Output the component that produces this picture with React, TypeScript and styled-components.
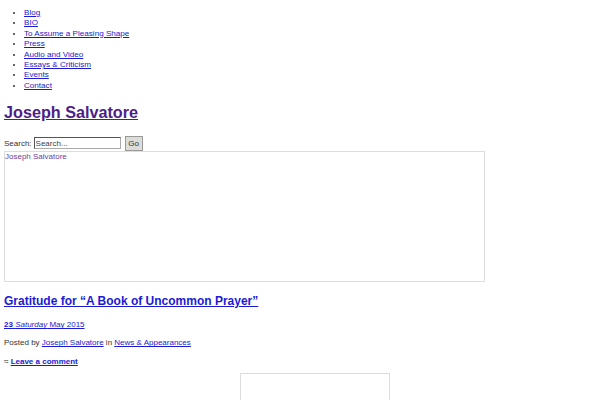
import React from "react";
import styled, { createGlobalStyle } from "styled-components";

const Global = createGlobalStyle`
  html, body { margin: 0; padding: 0; background: #fff; }
  body {
    font-family: "Liberation Sans", Arial, sans-serif;
    font-size: 8px;
    color: #333;
    padding: 0 4px;
  }
  a { color: #1a1ad6; }
`;

const Page = styled.div`
  display: flex;
  flex-direction: column;
  width: 592px;
`;

const Nav = styled.ul`
  margin: 8px 0 0;
  padding-left: 20px;
  list-style: disc;
  font-size: 8.1px;
  line-height: 10.4px;
`;

const NavItem = styled.li`
  a { color: #1a1ad6; }
`;

const SiteTitle = styled.h1`
  margin: 11px 0 0;
  font-size: 16.2px;
  line-height: 20px;
  font-weight: 700;
  a { color: #4b1f8a; }
`;

const SearchRow = styled.form`
  display: flex;
  align-items: center;
  margin-top: 13px;
  height: 16px;
  font-size: 8px;
`;

const SearchLabel = styled.label`
  margin-right: 2px;
  color: #333;
`;

const SearchInput = styled.input`
  width: 83px;
  height: 10px;
  padding: 0 1px;
  border: 1px solid #aaa;
  border-top-color: #555;
  border-left-color: #555;
  font-family: "Liberation Sans", Arial, sans-serif;
  font-size: 8px;
  color: #333;
  margin: 0 4px 0 0;
  &::placeholder { color: #444; }
`;

const GoButton = styled.button`
  width: 18px;
  height: 15px;
  padding: 0;
  border: 1px solid #999;
  background: #dcdcd8;
  font-family: "Liberation Sans", Arial, sans-serif;
  font-size: 8px;
  color: #333;
`;

const Banner = styled.div`
  width: 479px;
  height: 129px;
  border: 1px solid #ddd;
  font-size: 8px;
  line-height: 10px;
  color: #6b3fa0;
`;

const PostTitle = styled.h2`
  margin: 12px 0 0;
  font-size: 12px;
  line-height: 15px;
  font-weight: 700;
  a { color: #1a1ad6; }
`;

const Meta = styled.p<{ $top: number }>`
  margin: 0;
  font-size: 8px;
  line-height: 10px;
  margin-top: ${(p) => p.$top}px;
  a { color: #1a1ad6; }
`;

const BoldLink = styled.a`
  font-weight: 700;
`;

const Day = styled.em`
  font-style: italic;
`;

const Embed = styled.div`
  margin: 6px 0 0 236px;
  width: 148px;
  height: 40px;
  border: 1px solid #ddd;
`;

export default function App() {
  const nav = [
    "Blog",
    "BIO",
    "To Assume a Pleasing Shape",
    "Press",
    "Audio and Video",
    "Essays & Criticism",
    "Events",
    "Contact",
  ];
  return (
    <>
      <Global />
      <Page>
        <Nav>
          {nav.map((n) => (
            <NavItem key={n}>
              <a href="#">{n}</a>
            </NavItem>
          ))}
        </Nav>
        <SiteTitle>
          <a href="#">Joseph Salvatore</a>
        </SiteTitle>
        <SearchRow onSubmit={(e) => e.preventDefault()}>
          <SearchLabel>Search:</SearchLabel>
          <SearchInput placeholder="Search..." />
          <GoButton type="submit">Go</GoButton>
        </SearchRow>
        <Banner>Joseph Salvatore</Banner>
        <PostTitle>
          <a href="#">Gratitude for “A Book of Uncommon Prayer”</a>
        </PostTitle>
        <Meta $top={11}>
          <a href="#">
            <b>23</b> <Day>Saturday</Day> May 2015
          </a>
        </Meta>
        <Meta $top={8}>
          Posted by <a href="#">Joseph Salvatore</a> in{" "}
          <a href="#">News &amp; Appearances</a>
        </Meta>
        <Meta $top={9}>
          ≈ <BoldLink href="#">Leave a comment</BoldLink>
        </Meta>
        <Embed />
      </Page>
    </>
  );
}
